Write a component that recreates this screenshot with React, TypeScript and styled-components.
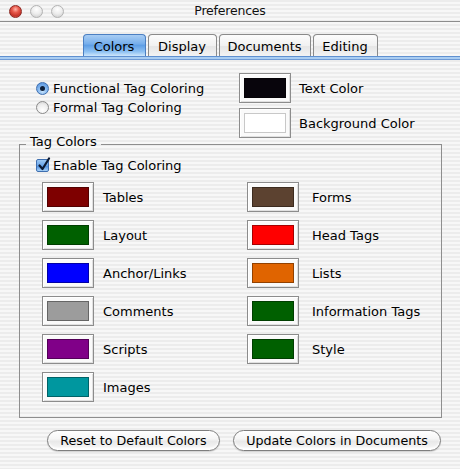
import React, { useState } from "react";
import styled, { createGlobalStyle, css } from "styled-components";

const GlobalStyle = createGlobalStyle`
  html, body {
    margin: 0;
    padding: 0;
    background: #f2f2f2;
  }
  body {
    font-family: "DejaVu Sans", "Liberation Sans", sans-serif;
    font-size: 13px;
    color: #000;
  }
`;

const pinstripe = css`
  background: repeating-linear-gradient(
    to bottom,
    #ececec 0px,
    #ececec 2px,
    #f7f7f7 2px,
    #f7f7f7 4px
  );
`;

const Window = styled.div`
  ${pinstripe};
  width: 460px;
  height: 469px;
  display: flex;
  flex-direction: column;
  overflow: hidden;
`;

const TitleBar = styled.div`
  height: 21px;
  border-bottom: 1px solid #8c8c8c;
  display: grid;
  grid-template-columns: 1fr auto 1fr;
  align-items: center;
`;

const Lights = styled.div`
  display: flex;
  gap: 8px;
  padding-left: 9px;
  padding-top: 1px;
`;

const Light = styled.span<{ $close?: boolean }>`
  width: 13px;
  height: 13px;
  border-radius: 50%;
  box-sizing: border-box;
  ${(p) =>
    p.$close
      ? css`
          border: 1px solid #8d2a25;
          background: radial-gradient(circle at 50% 30%, #ffb3a8 0%, #e85a4c 35%, #c4342a 70%, #e2685c 100%);
        `
      : css`
          border: 1px solid #b3b3b3;
          background: radial-gradient(circle at 50% 30%, #ffffff 0%, #ececec 50%, #d6d6d6 80%, #eeeeee 100%);
        `}
`;

const Title = styled.div`
  font-size: 12.5px;
  letter-spacing: -0.2px;
  color: #111;
`;

const TabBar = styled.div`
  margin-top: 12px;
  display: flex;
  flex-direction: column;
`;

const Tabs = styled.div`
  display: flex;
  justify-content: center;
  gap: 2px;
`;

const Tab = styled.div<{ $active?: boolean; $w: number }>`
  width: ${(p) => p.$w}px;
  height: 22px;
  box-sizing: border-box;
  border-radius: 4px 4px 0 0;
  border: 1px solid #8a8a8a;
  border-bottom: none;
  display: flex;
  align-items: center;
  justify-content: center;
  padding-top: 1px;
  font-size: 13px;
  ${(p) =>
    p.$active
      ? css`
          border-color: #4b7fc2;
          background: linear-gradient(
            to bottom,
            #a8cdf4 0%,
            #79b0ec 40%,
            #5f9fe6 50%,
            #8fc2f3 80%,
            #cfe6fb 100%
          );
        `
      : css`
          background: linear-gradient(to bottom, #fcfcfc 0%, #f1f1f1 50%, #e6e6e6 55%, #f3f3f3 100%);
        `}
`;

const TabRule = styled.div`
  height: 2px;
  border-top: 1px solid #5f90d0;
  border-bottom: 1px solid #6f9bd6;
  background: #a9cdf2;
`;

const Content = styled.div`
  display: flex;
  flex-direction: column;
`;

const TopSection = styled.div`
  display: flex;
  padding: 13px 0 0 36px;
`;

const RadioColumn = styled.div`
  width: 203px;
  padding-top: 6px;
  display: flex;
  flex-direction: column;
`;

const OptionRow = styled.label`
  display: flex;
  align-items: center;
  gap: 4px;
  height: 19px;
  cursor: default;
`;

const Radio = styled.span<{ $on?: boolean }>`
  width: 13px;
  height: 13px;
  border-radius: 50%;
  box-sizing: border-box;
  display: flex;
  align-items: center;
  justify-content: center;
  ${(p) =>
    p.$on
      ? css`
          border: 1px solid #3f6fb0;
          background: radial-gradient(circle at 50% 75%, #c8e4fc 0%, #7fb4ee 50%, #4d8ad8 100%);
          &::after {
            content: "";
            width: 5px;
            height: 5px;
            border-radius: 50%;
            background: #0e1f3a;
          }
        `
      : css`
          border: 1px solid #8a8a8a;
          background: radial-gradient(circle at 50% 75%, #ffffff 0%, #eeeeee 55%, #cfcfcf 100%);
        `}
`;

const Check = styled.span`
  width: 13px;
  height: 13px;
  border-radius: 2px;
  box-sizing: border-box;
  border: 1px solid #3f6fb0;
  background: linear-gradient(to bottom, #9cc8f4 0%, #6aa6ea 50%, #4c8ee0 55%, #a8d2f8 100%);
  position: relative;
  overflow: visible;
  svg {
    position: absolute;
    left: 0px;
    top: -3px;
  }
`;

const WellColumn = styled.div`
  display: flex;
  flex-direction: column;
  gap: 5px;
`;

const WellRow = styled.div<{ $gap?: number }>`
  display: flex;
  align-items: center;
  gap: ${(p) => p.$gap ?? 8}px;
`;

const Well = styled.div`
  width: 52px;
  height: 30px;
  box-sizing: border-box;
  border: 1px solid #8c8c8c;
  padding: 4px;
  background: #fafafa;
  box-shadow: inset 1px 1px 0 #ffffff, inset -1px -1px 0 #e0e0e0;
  display: flex;
`;

const Swatch = styled.div<{ $color: string }>`
  flex: 1;
  background: ${(p) => p.$color};
  border: 1px solid ${(p) => (p.$color === "#ffffff" ? "#c8c8c8" : "rgba(0, 0, 0, 0.35)")};
`;

const Group = styled.fieldset`
  margin: -4px 18px 0 19px;
  padding: 0;
  border: 1px solid #8e8e8e;
  min-width: 0;
`;

const Legend = styled.legend`
  margin-left: 6px;
  padding: 0 4px 4px;
  line-height: 16px;
  font-size: 13px;
`;

const GroupBody = styled.div`
  padding: 3px 0 15px 16px;
  display: flex;
  flex-direction: column;
`;

const EnableRow = styled(OptionRow)`
  height: 16px;
  margin-bottom: 9px;
`;

const TagGrid = styled.div`
  margin-left: 6px;
  display: grid;
  grid-template-columns: 205px 1fr;
  grid-auto-flow: column;
  grid-template-rows: repeat(6, 30px);
  row-gap: 8px;
`;

const Buttons = styled.div`
  margin-top: 12px;
  padding-right: 19px;
  display: flex;
  justify-content: flex-end;
  gap: 13px;
`;

const PillButton = styled.button<{ $w: number }>`
  width: ${(p) => p.$w}px;
  height: 21px;
  border-radius: 11px;
  border: 1px solid #7e7e7e;
  font-family: inherit;
  font-size: 12.7px;
  color: #000;
  padding: 0 0 1px;
  background: linear-gradient(
    to bottom,
    #ffffff 0%,
    #f6f6f6 40%,
    #e9e9e9 55%,
    #f1f1f1 80%,
    #ffffff 100%
  );
  box-shadow: inset 0 -2px 2px rgba(255, 255, 255, 0.9), 0 1px 1px rgba(0, 0, 0, 0.15);
`;

type Tag = { name: string; color: string };

const leftTags: Tag[] = [
  { name: "Tables", color: "#7e0000" },
  { name: "Layout", color: "#006000" },
  { name: "Anchor/Links", color: "#0000ff" },
  { name: "Comments", color: "#9c9c9c" },
  { name: "Scripts", color: "#800088" },
  { name: "Images", color: "#00979f" },
];

const rightTags: Tag[] = [
  { name: "Forms", color: "#5c4230" },
  { name: "Head Tags", color: "#ff0000" },
  { name: "Lists", color: "#e06400" },
  { name: "Information Tags", color: "#006000" },
  { name: "Style", color: "#006000" },
];

const tabs = [
  { label: "Colors", w: 63 },
  { label: "Display", w: 69 },
  { label: "Documents", w: 92 },
  { label: "Editing", w: 65 },
];

export default function App() {
  const [mode, setMode] = useState<"functional" | "formal">("functional");
  const [tab, setTab] = useState("Colors");

  return (
    <>
      <GlobalStyle />
      <Window>
        <TitleBar>
          <Lights>
            <Light $close />
            <Light />
            <Light />
          </Lights>
          <Title>Preferences</Title>
          <div />
        </TitleBar>

        <TabBar>
          <Tabs>
            {tabs.map((t) => (
              <Tab key={t.label} $w={t.w} $active={tab === t.label} onClick={() => setTab(t.label)}>
                {t.label}
              </Tab>
            ))}
          </Tabs>
          <TabRule />
        </TabBar>

        <Content>
          <TopSection>
            <RadioColumn>
              <OptionRow onClick={() => setMode("functional")}>
                <Radio $on={mode === "functional"} />
                Functional Tag Coloring
              </OptionRow>
              <OptionRow onClick={() => setMode("formal")}>
                <Radio $on={mode === "formal"} />
                Formal Tag Coloring
              </OptionRow>
            </RadioColumn>
            <WellColumn>
              <WellRow>
                <Well>
                  <Swatch $color="#08050c" />
                </Well>
                Text Color
              </WellRow>
              <WellRow>
                <Well>
                  <Swatch $color="#ffffff" />
                </Well>
                Background Color
              </WellRow>
            </WellColumn>
          </TopSection>

          <Group>
            <Legend>Tag Colors</Legend>
            <GroupBody>
              <EnableRow>
                <Check>
                  <svg width="14" height="15" viewBox="0 0 14 15">
                    <path
                      d="M2.5 8.5 L5.5 12 L12 1.5"
                      fill="none"
                      stroke="#0c1a33"
                      strokeWidth="2.2"
                      strokeLinecap="round"
                      strokeLinejoin="round"
                    />
                  </svg>
                </Check>
                Enable Tag Coloring
              </EnableRow>
              <TagGrid>
                {leftTags.map((t) => (
                  <WellRow key={t.name} $gap={9}>
                    <Well>
                      <Swatch $color={t.color} />
                    </Well>
                    {t.name}
                  </WellRow>
                ))}
                {rightTags.map((t) => (
                  <WellRow key={t.name} $gap={13}>
                    <Well>
                      <Swatch $color={t.color} />
                    </Well>
                    {t.name}
                  </WellRow>
                ))}
              </TagGrid>
            </GroupBody>
          </Group>

          <Buttons>
            <PillButton $w={173}>Reset to Default Colors</PillButton>
            <PillButton $w={208}>Update Colors in Documents</PillButton>
          </Buttons>
        </Content>
      </Window>
    </>
  );
}
